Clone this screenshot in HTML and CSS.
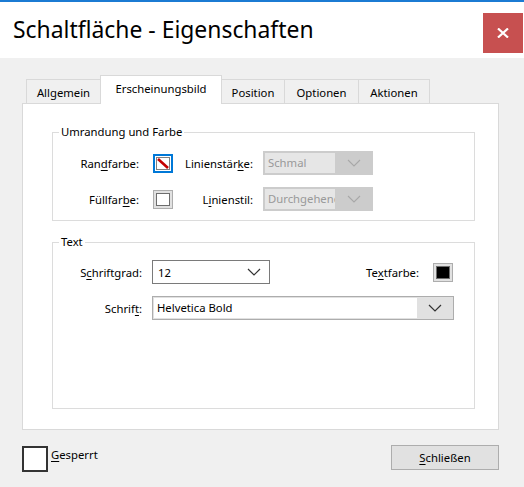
FILE: index.html
```html
<!DOCTYPE html>
<html lang="de">
<head>
<meta charset="utf-8">
<title>Schaltfläche - Eigenschaften</title>
<link rel="stylesheet" href="styles.css">
</head>
<body>
<div class="window">
  <div class="titlebar">
    <div class="title">Schaltfläche - Eigenschaften</div>
    <div class="close">
      <svg width="12" height="10" viewBox="0 0 12 10"><path d="M1 0.5 L11 9.5 M11 0.5 L1 9.5" stroke="#fff" stroke-width="2.2" fill="none"/></svg>
    </div>
  </div>
  <div class="main">
    <div class="tabs">
      <div class="tab t1">Allgemein</div>
      <div class="tab t2 active">Erscheinungsbild</div>
      <div class="tab t3">Position</div>
      <div class="tab t4">Optionen</div>
      <div class="tab t5">Aktionen</div>
    </div>
    <div class="panel">
      <fieldset class="group g1">
        <legend>Umrandung und Farbe</legend>
        <div class="grid1">
          <div class="lbl">Ran<u>d</u>farbe:</div>
          <div class="swatch-cell">
            <svg class="swatch" width="20" height="19" viewBox="0 0 20 19">
              <rect x="1" y="1" width="18" height="17" fill="#fff" stroke="#0078d7" stroke-width="2"/>
              <rect x="3.5" y="3.5" width="13" height="12" fill="#fff" stroke="#000" stroke-width="1" stroke-dasharray="1 1"/>
              <path d="M5 5 L15 14" stroke="#c40000" stroke-width="2.6"/>
            </svg>
          </div>
          <div class="lbl2">Linienstär<u>k</u>e:</div>
          <div class="dsel"><span class="dtext">Schmal</span><span class="arr"><svg width="14" height="8" viewBox="0 0 14 8"><path d="M1 1 L7 7 L13 1" stroke="#a8a8a8" stroke-width="1.1" fill="none"/></svg></span></div>

          <div class="lbl">Füllfar<u>b</u>e:</div>
          <div class="swatch-cell"><span class="cswatch"><span class="inner white"></span></span></div>
          <div class="lbl2">L<u>i</u>nienstil:</div>
          <div class="dsel"><span class="dtext">Durchgehend</span><span class="arr"><svg width="14" height="8" viewBox="0 0 14 8"><path d="M1 1 L7 7 L13 1" stroke="#a8a8a8" stroke-width="1.1" fill="none"/></svg></span></div>
        </div>
      </fieldset>
      <fieldset class="group g2">
        <legend>Text</legend>
        <div class="grid2">
          <div class="lbl">S<u>c</u>hriftgrad:</div>
          <div class="row1">
            <div class="wsel"><span>12</span><svg width="14" height="8" viewBox="0 0 14 8"><path d="M1 1 L7 7 L13 1" stroke="#333" stroke-width="1.2" fill="none"/></svg></div>
            <div class="tcolor">
              <span>Te<u>x</u>tfarbe:</span>
              <span class="cswatch"><span class="inner black"></span></span>
            </div>
          </div>
          <div class="lbl">Schrif<u>t</u>:</div>
          <div class="fsel"><span class="ftext">Helvetica Bold</span><span class="farr"><svg width="14" height="8" viewBox="0 0 14 8"><path d="M1 1 L7 7 L13 1" stroke="#333" stroke-width="1.2" fill="none"/></svg></span></div>
        </div>
      </fieldset>
    </div>
    <div class="footer">
      <div class="check"><span class="box"></span><span class="clabel"><u>G</u>esperrt</span></div>
      <div class="btn"><u>S</u>chließen</div>
    </div>
  </div>
</div>
</body>
</html>
```

FILE: styles.css
```css
* { box-sizing: border-box; }
html, body { margin: 0; padding: 0; }
body {
  width: 524px;
  height: 487px;
  background: #f0f0f0;
  font-family: "Noto Sans", "Open Sans", sans-serif;
  font-size: 11.3px;
  color: #000;
  overflow: hidden;
}
u { text-decoration: underline; text-underline-offset: 2px; }

.titlebar {
  height: 58px;
  border-top: 2px solid #1b7bd3;
  background: #fff;
  display: flex;
  justify-content: space-between;
  align-items: flex-start;
}
.title {
  font-size: 22.9px;
  line-height: 30px;
  padding: 13px 0 0 13px;
  color: #000;
}
.close {
  width: 40px;
  height: 40px;
  margin: 11px 1px 0 0;
  background: #c75050;
  display: flex;
  align-items: center;
  justify-content: center;
}

.main { padding: 17px 25px 0 22px; }

.tabs {
  display: flex;
  align-items: flex-end;
  height: 28px;
  padding-left: 4px;
}
.tab {
  height: 24px;
  border: 1px solid #d9d9d9;
  border-bottom: none;
  background: #f0f0f0;
  margin-left: -1px;
  display: flex;
  align-items: center;
  justify-content: center;
  padding-top: 1px;
}
.tab:first-child { margin-left: 0; }
.t1 { width: 75px; }
.t2 { width: 122px; }
.t3 { width: 64px; }
.t4 { width: 75px; }
.t5 { width: 72px; }
.tab.active {
  height: 29px;
  background: #fff;
  margin-bottom: -1px;
  position: relative;
  z-index: 1;
  align-items: flex-start;
  padding-top: 5px;
}

.panel {
  background: #fff;
  border: 1px solid #d9d9d9;
  height: 327px;
  width: 477px;
  padding: 0 23px 0 29px;
  display: flex;
  flex-direction: column;
}

.group {
  margin: 0;
  padding: 0;
  border: 1px solid #dcdcdc;
  min-width: 0;
}
.group legend {
  margin-left: 6px;
  padding: 0 2px;
  line-height: 16px;
}
.g1 { margin-top: 20px; height: 97px; }
.g2 { margin-top: 13px; height: 175px; }

.grid1 {
  display: grid;
  grid-template-columns: 100px 20px 90px 110px;
  grid-template-rows: 24px 24px;
  row-gap: 12px;
  margin-top: 11px;
}
.lbl, .lbl2 {
  display: flex;
  align-items: center;
  justify-content: flex-end;
}
.grid1 .lbl { padding-right: 14px; }
.grid1 .lbl2 { padding-right: 10px; }
.swatch-cell { display: flex; align-items: center; }
.swatch { display: block; }

.cswatch {
  width: 20px;
  height: 19px;
  border: 1px solid #adadad;
  background: #e1e1e1;
  display: flex;
  align-items: center;
  justify-content: center;
}
.cswatch .inner {
  width: 14px;
  height: 13px;
  border: 1px solid #6d6d6d;
}
.inner.white { background: #fff; }
.inner.black { background: #000; }

.dsel {
  width: 110px;
  height: 24px;
  background: #cccccc;
  display: flex;
  align-items: center;
  padding: 2px;
}
.dtext {
  width: 70px;
  height: 20px;
  background: #e6e6e6;
  color: #999;
  line-height: 20px;
  padding-left: 3px;
  white-space: nowrap;
  overflow: hidden;
}
.arr { flex: 1; display: flex; justify-content: center; align-items: center; padding-left: 2px; }
.arr svg, .farr svg, .wsel svg { display: block; }

.grid2 {
  display: grid;
  grid-template-columns: 89px 302px;
  grid-template-rows: 24px 24px;
  column-gap: 10px;
  row-gap: 12px;
  margin-top: 10px;
}
.row1 {
  display: flex;
  align-items: center;
  justify-content: space-between;
}
.wsel {
  width: 118px;
  height: 24px;
  border: 1px solid #7a7a7a;
  background: #fff;
  display: flex;
  align-items: center;
  justify-content: space-between;
  padding: 0 8px 0 5px;
}
.tcolor {
  display: flex;
  align-items: center;
  gap: 14px;
  padding-right: 1px;
}
.fsel {
  height: 24px;
  border: 1px solid #adadad;
  background: #e1e1e1;
  display: flex;
  align-items: center;
  padding: 1px;
}
.ftext {
  width: 263px;
  height: 20px;
  background: #fff;
  line-height: 20px;
  padding-left: 3px;
}
.farr { flex: 1; display: flex; justify-content: center; }

.footer {
  display: flex;
  justify-content: space-between;
  align-items: flex-start;
  margin-top: 15px;
}
.check { display: flex; align-items: flex-start; gap: 3px; margin-top: 1px; }
.box {
  width: 26px;
  height: 26px;
  border: 2px solid #333;
  background: #fff;
}
.clabel { line-height: 16px; margin-top: 1px; }
.btn {
  width: 108px;
  height: 25px;
  background: #e1e1e1;
  border: 1px solid #adadad;
  display: flex;
  align-items: center;
  justify-content: center;
}
```
